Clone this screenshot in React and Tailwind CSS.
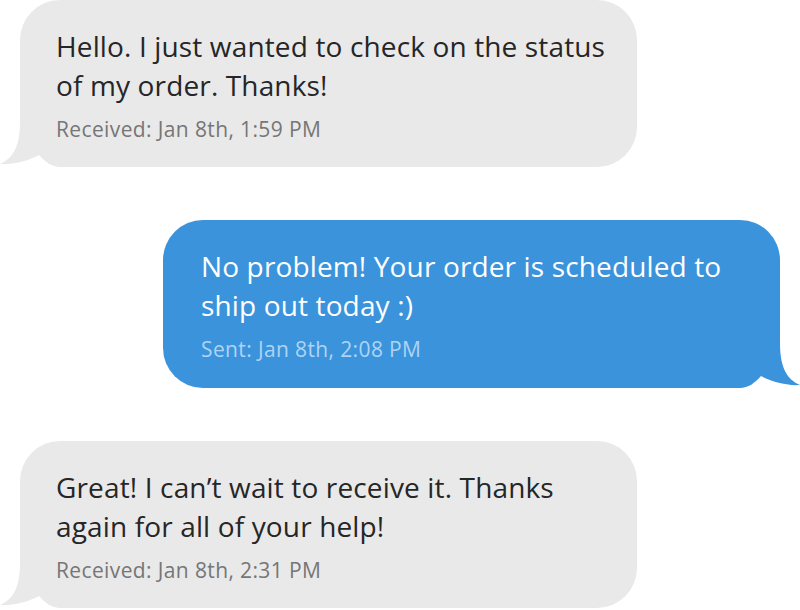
import React from "react";

const Tail = ({ color, side }) => (
  <svg
    width="80"
    height="70"
    viewBox="0 0 80 70"
    className={
      side === "left"
        ? "absolute bottom-0 -left-[20px]"
        : "absolute bottom-0 -right-[20px] -scale-x-100"
    }
  >
    <path
      d="M20 0 L20 25 C20 48 14 61 0 67 C14 68 30 63 39 58 C45 65 52 70 60 70 L80 70 L80 0 Z"
      fill={color}
    />
  </svg>
);

const Bubble = ({ sent, lines, stamp, className }) => (
  <div
    className={`relative h-[167px] w-[617px] ${
      sent
        ? "rounded-[40px_40px_60px_40px] bg-[#3b93dc] pl-[38px]"
        : "rounded-[40px_40px_40px_60px] bg-[#e9e9e9] pl-[36px]"
    } pt-[27px] ${className}`}
  >
    <Tail color={sent ? "#3b93dc" : "#e9e9e9"} side={sent ? "right" : "left"} />
    <div className="relative">
      <p
        className={`text-[28px] leading-[39px] tracking-[0.005em] ${
          sent ? "text-white" : "text-[#262626]"
        }`}
      >
        {lines[0]}
        <br />
        {lines[1]}
      </p>
      <p
        className={`mt-[10px] text-[21px] leading-[28px] tracking-[0.018em] ${
          sent ? "text-[#add4f4]" : "text-[#767676]"
        }`}
      >
        {stamp}
      </p>
    </div>
  </div>
);

export default function App() {
  return (
    <div
      className="flex h-[610px] w-[800px] flex-col overflow-hidden bg-white"
      style={{ fontFamily: '"Open Sans", "Noto Sans", sans-serif' }}
    >
      <Bubble
        className="ml-[20px]"
        lines={["Hello. I just wanted to check on the status", "of my order. Thanks!"]}
        stamp="Received: Jan 8th, 1:59 PM"
      />
      <Bubble
        sent
        className="ml-[163px] mt-[53px] h-[168px]"
        lines={["No problem! Your order is scheduled to", "ship out today :)"]}
        stamp="Sent: Jan 8th, 2:08 PM"
      />
      <Bubble
        className="ml-[20px] mt-[53px]"
        lines={["Great! I can’t wait to receive it. Thanks", "again for all of your help!"]}
        stamp="Received: Jan 8th, 2:31 PM"
      />
    </div>
  );
}
